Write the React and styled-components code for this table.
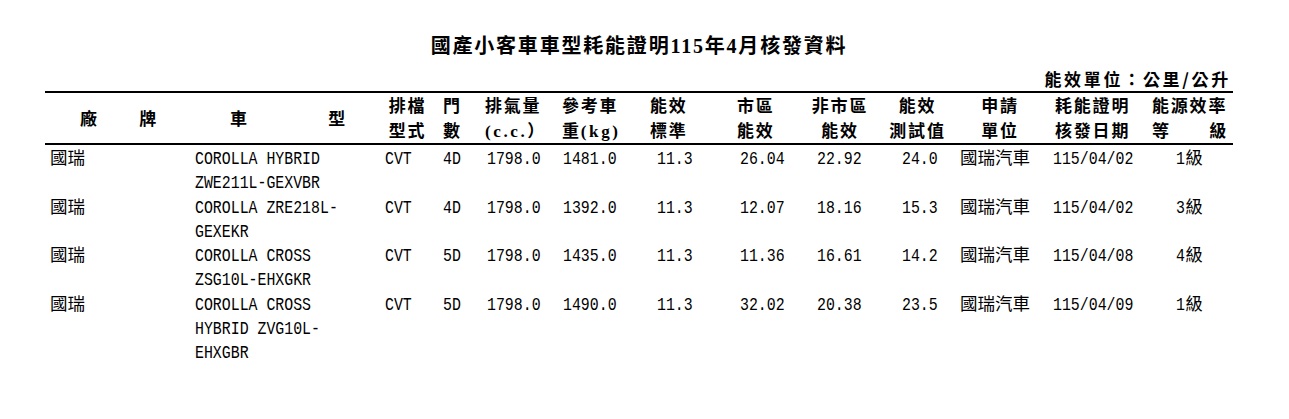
import React from "react";
import styled, { createGlobalStyle } from "styled-components";

const GlobalStyle = createGlobalStyle`
  body {
    margin: 0;
    background: #fff;
    color: #000;
  }
`;

const COLS = "145px 190px 55px 45px 76px 84px 80px 80px 80px 75px 90px 100px 88px";

const Page = styled.div`
  width: 1188px;
  padding: 34px 0 0 45px;
`;

const Title = styled.h1`
  margin: 0;
  height: 25px;
  line-height: 25px;
  text-align: center;
  font-family: "Liberation Serif", "Noto Sans CJK TC", serif;
  font-size: 20px;
  font-weight: 700;
  letter-spacing: 1.8px;
`;

const Unit = styled.div`
  margin-top: 8px;
  height: 24px;
  line-height: 24px;
  text-align: right;
  padding-right: 2px;
  font-family: "Noto Sans CJK TC", sans-serif;
  font-size: 17px;
  font-weight: 700;
  letter-spacing: 2.7px;
`;

const Table = styled.div`
  border-top: 2px solid #000;
`;

const HeadRow = styled.div`
  display: grid;
  grid-template-columns: ${COLS};
  height: 52px;
  padding-top: 1px;
  box-sizing: border-box;
  border-bottom: 2px solid #000;
  font-family: "Liberation Serif", "Noto Sans CJK TC", serif;
  font-size: 17px;
  font-weight: 700;
  letter-spacing: 1.8px;
`;

const HeadCell = styled.div`
  display: flex;
  flex-direction: column;
  justify-content: ${(p) => (p.$middle ? "center" : "flex-start")};
  align-items: ${(p) => (p.$center ? "center" : "stretch")};
  padding-left: ${(p) => p.$pl || 0}px;
  padding-right: ${(p) => p.$pr || 0}px;
`;

const HeadLine = styled.div`
  height: 25px;
  line-height: 25px;
  white-space: nowrap;
  display: flex;
  justify-content: ${(p) => (p.$spread ? "space-between" : "flex-start")};
`;

const Latin = styled.span`
  letter-spacing: 2.6px;
`;

const Row = styled.div`
  display: grid;
  grid-template-columns: ${COLS};
`;

const Cell = styled.div`
  padding-left: ${(p) => p.$pl || 0}px;
  font-family: "Noto Sans CJK TC", sans-serif;
  font-size: 17.5px;
`;

const Line = styled.div`
  height: 24.3px;
  line-height: 24.3px;
  white-space: nowrap;
`;

const Mono = styled.span`
  display: inline-block;
  font-family: "Liberation Mono", monospace;
  font-size: 18.6px;
  transform: scaleX(0.8);
  transform-origin: left center;
`;

const Grade = styled.span`
  margin-left: -2px;
`;

const head = [
  { lines: [["廠", "牌"]], pl: 35, pr: 32, middle: true },
  { lines: [["車", "型"]], pl: 40, pr: 33, middle: true },
  { lines: ["排檔", "型式"], center: true },
  { lines: ["門", "數"], pl: 8 },
  { lines: ["排氣量", <Latin key="cc">(c.c.）</Latin>], pl: 5 },
  { lines: ["參考車", <span key="kg">重<Latin>(kg)</Latin></span>], pl: 6 },
  { lines: ["能效", "標準"], pl: 10 },
  { lines: ["市區", "能效"], pl: 17 },
  { lines: ["非市區", "能效"], center: true },
  { lines: ["能效", "測試值"], center: true },
  { lines: ["申請", "單位"], center: true },
  { lines: ["耗能證明", "核發日期"], pl: 10 },
  { lines: ["能源效率", ["等", "級"]], pl: 7, pr: 5 },
];

const pads = [5, 5, 5, 8, 7, 7, 17, 20, 17, 22, 5, 8, 31];

const rows = [
  {
    model: ["COROLLA HYBRID", "ZWE211L-GEXVBR"],
    vals: ["CVT", "4D", "1798.0", "1481.0", "11.3", "26.04", "22.92", "24.0"],
    date: "115/04/02",
    grade: 1,
  },
  {
    model: ["COROLLA ZRE218L-", "GEXEKR"],
    vals: ["CVT", "4D", "1798.0", "1392.0", "11.3", "12.07", "18.16", "15.3"],
    date: "115/04/02",
    grade: 3,
  },
  {
    model: ["COROLLA CROSS", "ZSG10L-EHXGKR"],
    vals: ["CVT", "5D", "1798.0", "1435.0", "11.3", "11.36", "16.61", "14.2"],
    date: "115/04/08",
    grade: 4,
  },
  {
    model: ["COROLLA CROSS", "HYBRID ZVG10L-", "EHXGBR"],
    vals: ["CVT", "5D", "1798.0", "1490.0", "11.3", "32.02", "20.38", "23.5"],
    date: "115/04/09",
    grade: 1,
  },
];

const renderHeadLine = (line, i) =>
  Array.isArray(line) ? (
    <HeadLine key={i} $spread>
      {line.map((t) => (
        <span key={t}>{t}</span>
      ))}
    </HeadLine>
  ) : (
    <HeadLine key={i}>{line}</HeadLine>
  );

export default function App() {
  return (
    <>
      <GlobalStyle />
      <Page>
        <Title>國產小客車車型耗能證明115年4月核發資料</Title>
        <Unit>能效單位：公里/公升</Unit>
        <Table>
          <HeadRow>
            {head.map((h, i) => (
              <HeadCell key={i} $pl={h.pl} $pr={h.pr} $middle={h.middle} $center={h.center}>
                {h.lines.map(renderHeadLine)}
              </HeadCell>
            ))}
          </HeadRow>
          {rows.map((r, i) => (
            <Row key={i}>
              <Cell $pl={pads[0]}>
                <Line>國瑞</Line>
              </Cell>
              <Cell $pl={pads[1]}>
                {r.model.map((m) => (
                  <Line key={m}>
                    <Mono>{m}</Mono>
                  </Line>
                ))}
              </Cell>
              {r.vals.map((v, j) => (
                <Cell key={j} $pl={pads[j + 2]}>
                  <Line>
                    <Mono>{v}</Mono>
                  </Line>
                </Cell>
              ))}
              <Cell $pl={pads[10]}>
                <Line>國瑞汽車</Line>
              </Cell>
              <Cell $pl={pads[11]}>
                <Line>
                  <Mono>{r.date}</Mono>
                </Line>
              </Cell>
              <Cell $pl={pads[12]}>
                <Line>
                  <Mono>{r.grade}</Mono>
                  <Grade>級</Grade>
                </Line>
              </Cell>
            </Row>
          ))}
        </Table>
      </Page>
    </>
  );
}
